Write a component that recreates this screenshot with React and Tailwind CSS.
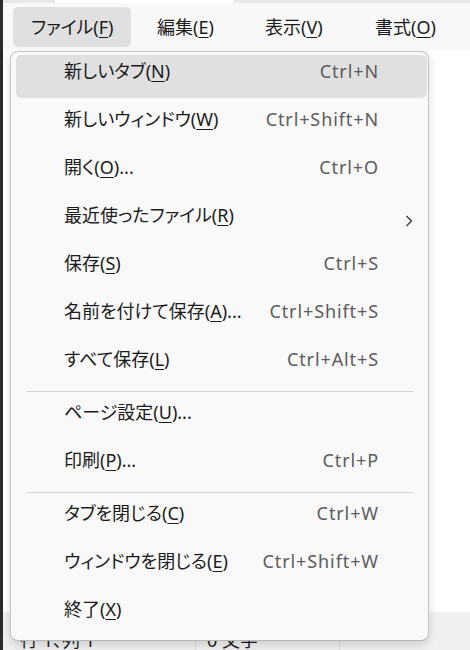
import React from "react";

const JP = {
  fontFamily: '"Noto Sans", "Noto Sans CJK JP", sans-serif',
  fontFeatureSettings: '"palt"',
};

function Mn({ children }) {
  return <span className="underline decoration-1 underline-offset-[3px]">{children}</span>;
}

const items = [
  { label: ["新しいタブ(", "N", ")"], sc: "Ctrl+N", active: true },
  { label: ["新しいウィンドウ(", "W", ")"], sc: "Ctrl+Shift+N" },
  { label: ["開く(", "O", ")..."], sc: "Ctrl+O" },
  { label: ["最近使ったファイル(", "R", ")"], sub: true },
  { label: ["保存(", "S", ")"], sc: "Ctrl+S" },
  { label: ["名前を付けて保存(", "A", ")..."], sc: "Ctrl+Shift+S" },
  { label: ["すべて保存(", "L", ")"], sc: "Ctrl+Alt+S" },
  "sep",
  { label: ["ページ設定(", "U", ")..."] },
  { label: ["印刷(", "P", ")..."], sc: "Ctrl+P" },
  "sep",
  { label: ["タブを閉じる(", "C", ")"], sc: "Ctrl+W" },
  { label: ["ウィンドウを閉じる(", "E", ")"], sc: "Ctrl+Shift+W" },
  { label: ["終了(", "X", ")"] },
];

function Row({ it }) {
  return (
    <div className="h-[48px] pt-[3px]">
      <div
        className={
          "h-[43px] ml-[5px] mr-[1px] rounded-[5px] flex items-start pt-[6px] pl-[48px] " +
          (it.active ? "bg-[#e0e0e0]" : "")
        }
      >
        <div className="flex-1 text-[18px] leading-[20px] text-[#1b1b1b] whitespace-nowrap">
          {it.label[0]}
          <Mn>{it.label[1]}</Mn>
          {it.label[2]}
        </div>
        <div className="text-[18px] leading-[20px] tracking-[0.9px] text-[#5c5c5c] whitespace-nowrap text-right">
          {it.sc || ""}
        </div>
        <div className="w-[48px] pl-[26px] shrink-0">
          {it.sub && (
            <svg width="8" height="12" viewBox="0 0 8 12" className="mt-[10px]">
              <path d="M1.5 1 L6.5 6 L1.5 11" fill="none" stroke="#333" strokeWidth="1.3" />
            </svg>
          )}
        </div>
      </div>
    </div>
  );
}

function Sep() {
  return (
    <div className="h-[5px] pt-[3px]">
      <div className="ml-[16px] mr-[15px] h-px bg-[#d4d4d4]" />
    </div>
  );
}

export default function App() {
  const bar = [
    { t: ["ファイル(", "F", ")"], w: "w-[118px]", active: true },
    { t: ["編集(", "E", ")"], w: "w-[100px]" },
    { t: ["表示(", "V", ")"], w: "w-[102px]" },
    { t: ["書式(", "O", ")"], w: "w-[100px]" },
  ];
  return (
    <div className="relative w-[470px] h-[650px] overflow-hidden bg-white flex" style={JP}>
      <div className="w-[3px] bg-[#2b2b2b] shrink-0" />
      <div className="flex-1 flex flex-col">
        <div className="h-[3px] bg-[#e8e8e8] flex">
          <div className="ml-[52px] w-[178px] bg-white" />
        </div>
        <div className="h-[47px] bg-[#f8f8f8] flex items-center gap-[8px] pl-[10px]">
          {bar.map((b, i) => (
            <div
              key={i}
              className={
                "h-[40px] shrink-0 rounded-[5px] flex items-center pl-[18px] pt-[2px] text-[18px] text-[#1b1b1b] whitespace-nowrap " +
                b.w +
                (b.active ? " bg-[#e0e0e0]" : "")
              }
            >
              {b.t[0]}
              <Mn>{b.t[1]}</Mn>
              {b.t[2]}
            </div>
          ))}
        </div>
        <div className="flex-1 bg-white" />
        <div className="h-[38px] bg-[#f0f0f0] flex text-[18px] leading-[20px] text-[#1b1b1b]">
          <div className="w-[193px] border-r border-[#dcdcdc] pl-[17px] pt-[18px] whitespace-nowrap">行 1、列 1</div>
          <div className="w-[144px] border-r border-[#dcdcdc] pl-[11px] pt-[18px] whitespace-nowrap">0 文字</div>
          <div className="flex-1" />
        </div>
      </div>

      <div className="absolute left-[10px] top-[51px] w-[419px] h-[590px] rounded-[8px] border border-[#c4c4c4] border-b-[#b8b8b8] bg-[#f9f9f9] shadow-[0_4px_10px_rgba(0,0,0,0.14)]">
        {items.map((it, i) => (it === "sep" ? <Sep key={i} /> : <Row key={i} it={it} />))}
      </div>
    </div>
  );
}
